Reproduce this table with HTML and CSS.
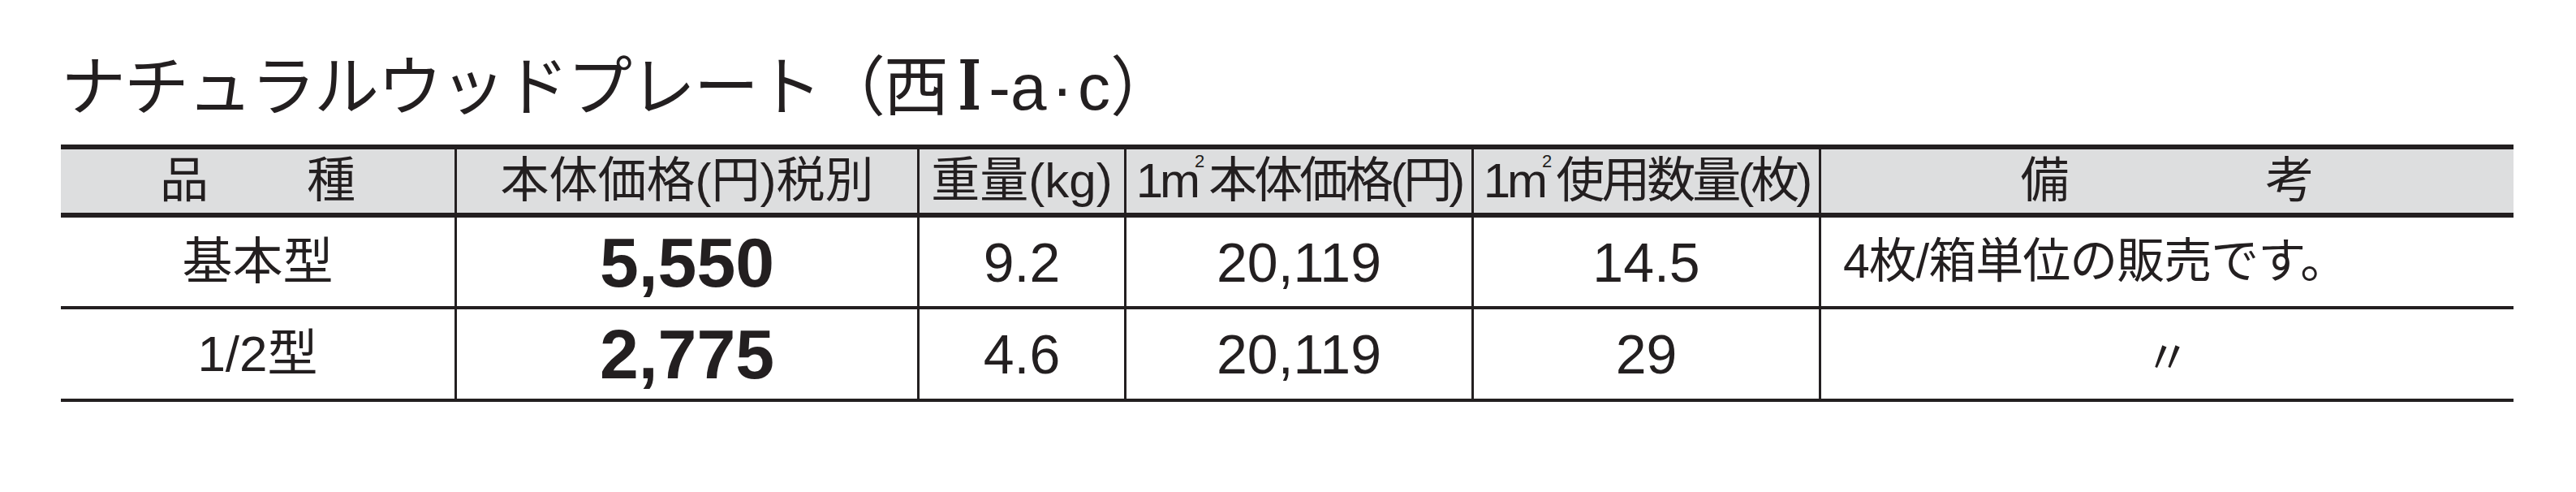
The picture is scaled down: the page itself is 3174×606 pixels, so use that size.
FILE: index.html
```html
<!DOCTYPE html>
<html lang="ja">
<head>
<meta charset="utf-8">
<title>ナチュラルウッドプレート</title>
<link rel="stylesheet" href="styles.css">
</head>
<body>
<div class="page">
  <h1 class="title">ナチュラルウッドプレート（西<span class="roman">Ⅰ</span><span class="lat">-a<span class="dot">·</span>c</span>）</h1>
  <div class="table">
    <div class="row head">
      <div class="cell"><span class="spread spread-sm"><span>品</span><span>種</span></span></div>
      <div class="cell">本体価格(円)税別</div>
      <div class="cell">重量(kg)</div>
      <div class="cell tight">1m<span class="sup">2</span>本体価格(円)</div>
      <div class="cell tight">1m<span class="sup">2</span>使用数量(枚)</div>
      <div class="cell"><span class="spread spread-lg"><span>備</span><span>考</span></span></div>
    </div>
    <div class="row body">
      <div class="cell label">基本型</div>
      <div class="cell price">5,550</div>
      <div class="cell num">9.2</div>
      <div class="cell num">20,119</div>
      <div class="cell num">14.5</div>
      <div class="cell note">4枚/箱単位の販売です。</div>
    </div>
    <div class="row body">
      <div class="cell label">1/2型</div>
      <div class="cell price">2,775</div>
      <div class="cell num">4.6</div>
      <div class="cell num">20,119</div>
      <div class="cell num">29</div>
      <div class="cell ditto">〃</div>
    </div>
  </div>
</div>
</body>
</html>
```
FILE: styles.css
```css
html, body {
  margin: 0;
  padding: 0;
  background: #ffffff;
}

.page {
  padding-left: 75px;
  color: #231f20;
  font-family: "Noto Sans CJK JP", sans-serif;
}

.title {
  margin: 0;
  height: 178px;
  box-sizing: border-box;
  padding-top: 60px;
  font-size: 80px;
  line-height: 80px;
  font-weight: 400;
  letter-spacing: -2px;
  white-space: nowrap;
}

.title .roman {
  display: inline-block;
  font-family: "DejaVu Serif", "Noto Sans CJK JP", serif;
  font-size: 84px;
  font-weight: 700;
  transform: scaleX(0.72);
  margin: 0 4px 0 8px;
  letter-spacing: 0;
}

.title .lat {
  font-family: "Liberation Sans", sans-serif;
  letter-spacing: 0;
}

.title .dot {
  margin: 0 6px;
}

.table {
  width: 3022px;
  border-top: 6px solid #231f20;
}

.row {
  display: grid;
  grid-template-columns: 485px 570px 255px 428px 428px 856px;
}

.head {
  height: 84px;
  box-sizing: border-box;
  border-bottom: 6px solid #231f20;
  background: #dddedf;
}

.body {
  height: 113px;
  box-sizing: border-box;
  border-bottom: 4px solid #231f20;
}

.body + .body {
  height: 114px;
}

.cell {
  display: flex;
  align-items: center;
  justify-content: center;
  box-sizing: border-box;
  white-space: nowrap;
  line-height: 1;
}

.cell + .cell {
  border-left: 3px solid #231f20;
}

.head .cell {
  font-family: "Liberation Sans", "Noto Sans CJK JP", sans-serif;
  font-size: 60px;
}

.head .cell.tight {
  letter-spacing: -4px;
}

.sup {
  display: inline-block;
  font-size: 22px;
  line-height: 1;
  transform: translateY(-24px);
  margin-left: -3px;
  margin-right: 5px;
  letter-spacing: 0;
}

.spread {
  display: flex;
}

.spread-sm {
  gap: 121px;
}

.spread-lg {
  gap: 242px;
}

.label {
  font-family: "Liberation Sans", "Noto Sans CJK JP", sans-serif;
  font-size: 62px;
}

.price {
  font-family: "Liberation Sans", sans-serif;
  font-weight: 700;
  font-size: 86px;
}

.num {
  font-family: "Liberation Sans", sans-serif;
  font-size: 68px;
}

.note {
  justify-content: flex-start;
  padding-left: 27px;
  font-family: "Liberation Sans", "Noto Sans CJK JP", sans-serif;
  font-size: 59px;
  letter-spacing: -1px;
}

.ditto {
  font-size: 56px;
}
```
